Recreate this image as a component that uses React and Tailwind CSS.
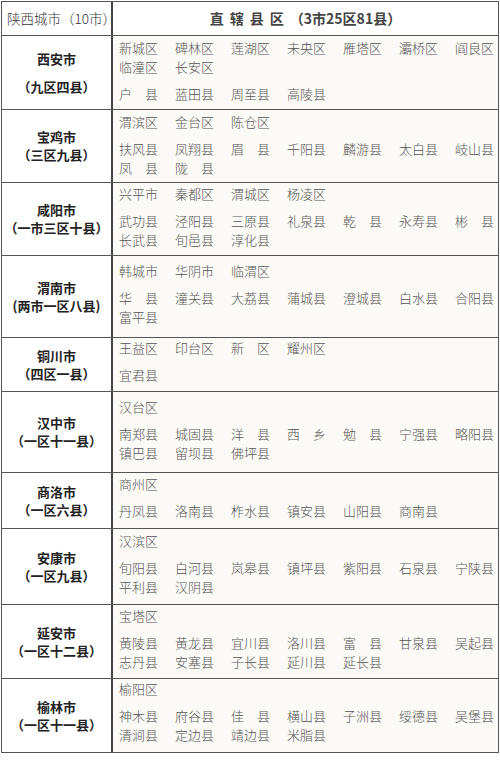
import React from 'react';

const cities = [
  {
    name: '西安市',
    sub: '（九区四县）',
    h: 'h-[74px]',
    pt: 'pt-[2px]',
    labelGap: 'gap-[10px]',
    groups: [
      ['新城区', '碑林区', '莲湖区', '未央区', '雁塔区', '灞桥区', '阎良区', '临潼区', '长安区'],
      ['户　县', '蓝田县', '周至县', '高陵县'],
    ],
  },
  {
    name: '宝鸡市',
    sub: '（三区九县）',
    h: 'h-[73px]',
    pt: 'pt-[2px]',
    groups: [
      ['渭滨区', '金台区', '陈仓区'],
      ['扶风县', '凤翔县', '眉　县', '千阳县', '麟游县', '太白县', '岐山县', '凤　县', '陇　县'],
    ],
  },
  {
    name: '咸阳市',
    sub: '（一市三区十县）',
    h: 'h-[73px]',
    pt: 'pt-[1px]',
    groups: [
      ['兴平市', '秦都区', '渭城区', '杨凌区'],
      ['武功县', '泾阳县', '三原县', '礼泉县', '乾　县', '永寿县', '彬　县', '长武县', '旬邑县', '淳化县'],
    ],
  },
  {
    name: '渭南市',
    sub: '(两市一区八县)',
    h: 'h-[82px]',
    pt: 'pt-[5px]',
    groups: [
      ['韩城市', '华阴市', '临渭区'],
      ['华　县', '潼关县', '大荔县', '蒲城县', '澄城县', '白水县', '合阳县', '富平县'],
    ],
  },
  {
    name: '铜川市',
    sub: '（四区一县）',
    h: 'h-[54px]',
    pt: 'pt-0',
    groups: [
      ['王益区', '印台区', '新　区', '耀州区'],
      ['宜君县'],
    ],
  },
  {
    name: '汉中市',
    sub: '（一区十一县）',
    h: 'h-[81px]',
    pt: 'pt-[5px]',
    groups: [
      ['汉台区'],
      ['南郑县', '城固县', '洋　县', '西　乡', '勉　县', '宁强县', '略阳县', '镇巴县', '留坝县', '佛坪县'],
    ],
  },
  {
    name: '商洛市',
    sub: '（一区六县）',
    h: 'h-[56px]',
    pt: 'pt-[1px]',
    groups: [
      ['商州区'],
      ['丹凤县', '洛南县', '柞水县', '镇安县', '山阳县', '商南县'],
    ],
  },
  {
    name: '安康市',
    sub: '（一区九县）',
    h: 'h-[76px]',
    pt: 'pt-[2px]',
    groups: [
      ['汉滨区'],
      ['旬阳县', '白河县', '岚皋县', '镇坪县', '紫阳县', '石泉县', '宁陕县', '平利县', '汉阴县'],
    ],
  },
  {
    name: '延安市',
    sub: '（一区十二县）',
    h: 'h-[74px]',
    pt: 'pt-[1px]',
    groups: [
      ['宝塔区'],
      ['黄陵县', '黄龙县', '宜川县', '洛川县', '富　县', '甘泉县', '吴起县', '志丹县', '安塞县', '子长县', '延川县', '延长县'],
    ],
  },
  {
    name: '榆林市',
    sub: '（一区十一县）',
    h: 'h-[73px]',
    pt: 'pt-0',
    last: true,
    groups: [
      ['榆阳区'],
      ['神木县', '府谷县', '佳　县', '横山县', '子洲县', '绥德县', '吴堡县', '清涧县', '定边县', '靖边县', '米脂县'],
    ],
  },
];

const font = { fontFamily: '"Noto Sans CJK SC", "Liberation Sans", sans-serif' };

const App = () => {
  return (
    <div className="w-[500px] h-[763px] bg-white" style={font}>
      <div className="ml-[1px] mt-[1px] w-[498px] border border-[#555]">
        {/* header */}
        <div className="flex h-[34px] border-b border-[#555]">
          <div className="w-[111px] shrink-0 border-r-2 border-[#444] flex items-center pl-[5px] text-[13.5px] font-light text-[#333] whitespace-nowrap">
            陕西城市（10市）
          </div>
          <div className="flex-1 flex items-center justify-center text-[14px] font-bold text-[#444] whitespace-nowrap">
            <span className="tracking-[6px]">直辖县区</span>
            <span>（3市25区81县）</span>
          </div>
        </div>

        {cities.map((city) => (
          <div
            key={city.name}
            className={`flex ${city.h} ${city.last ? '' : 'border-b border-[#555]'}`}
          >
            <div
              className={`w-[111px] shrink-0 border-r-2 border-[#444] flex flex-col items-center justify-center ${city.labelGap || ''} text-[13px] leading-[18px] font-bold text-[#222] whitespace-nowrap`}
            >
              <span>{city.name}</span>
              <span>{city.sub}</span>
            </div>
            <div className={`flex-1 bg-[#fcfaf7] pl-[6px] ${city.pt} flex flex-col gap-[8px]`}>
              {city.groups.map((group, i) => (
                <div
                  key={i}
                  className="grid grid-cols-[repeat(6,56px)_39px] text-[13px] leading-[19px] font-light text-[#555] whitespace-nowrap"
                >
                  {group.map((item) => (
                    <span key={item}>{item}</span>
                  ))}
                </div>
              ))}
            </div>
          </div>
        ))}
      </div>
    </div>
  );
};

export default App;
